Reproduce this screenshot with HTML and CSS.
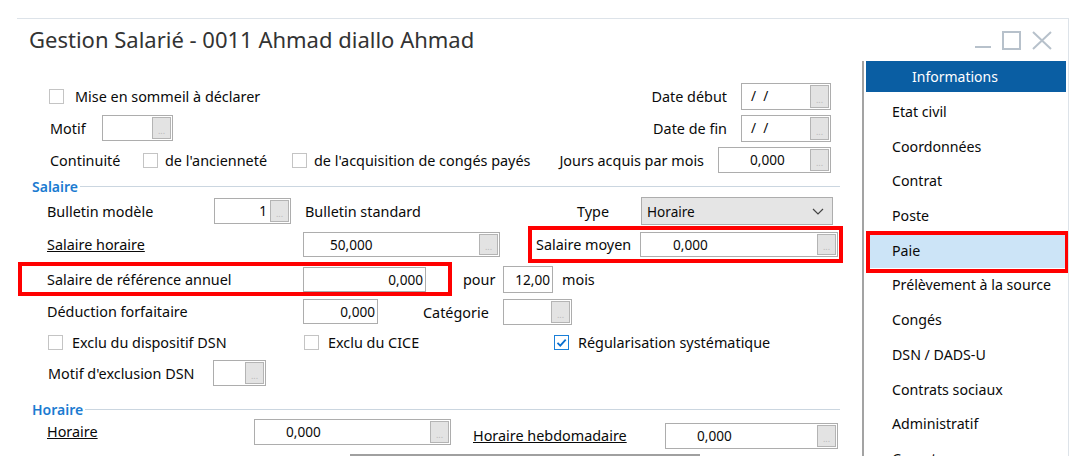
FILE: index.html
```html
<!DOCTYPE html>
<html lang="fr">
<head>
<meta charset="utf-8">
<title>Gestion Salarié</title>
<link rel="stylesheet" href="styles.css">
</head>
<body>
<div class="window">
  <header class="titlebar">
    <h1 class="title">Gestion Salarié - 0011 Ahmad diallo Ahmad</h1>
    <div class="controls">
      <svg width="16" height="19" viewBox="0 0 16 19"><path d="M0 16h16" stroke="#b7c1cb" stroke-width="2"/></svg>
      <svg width="19" height="19" viewBox="0 0 19 19"><rect x="1" y="1" width="17" height="17" fill="none" stroke="#b7c1cb" stroke-width="2"/></svg>
      <svg width="20" height="19" viewBox="0 0 20 19"><path d="M1 1L19 18M19 1L1 18" stroke="#b7c1cb" stroke-width="2"/></svg>
    </div>
  </header>
  <div class="content">
    <main class="form">
      <div class="row row-top">
        <span class="cb"></span><span class="cb-label">Mise en sommeil à déclarer</span>
        <div class="right">
          <span class="rlbl">Date début</span>
          <div class="field date"><span class="val">/&nbsp;&nbsp;/</span><span class="dots">...</span></div>
        </div>
      </div>
      <div class="row row-top">
        <span class="lbl motif-lbl">Motif</span>
        <div class="field motif"><span class="val"></span><span class="dots">...</span></div>
        <div class="right">
          <span class="rlbl">Date de fin</span>
          <div class="field date"><span class="val">/&nbsp;&nbsp;/</span><span class="dots">...</span></div>
        </div>
      </div>
      <div class="row row-top">
        <span class="lbl cont-lbl">Continuité</span>
        <span class="cb"></span><span class="cb-label anc">de l'ancienneté</span>
        <span class="cb"></span><span class="cb-label">de l'acquisition de congés payés</span>
        <div class="right">
          <span class="rlbl">Jours acquis par mois</span>
          <div class="field jours"><span class="val">0,000</span><span class="dots">...</span></div>
        </div>
      </div>

      <div class="section">Salaire</div>

      <div class="row row-d">
        <span class="lbl col1">Bulletin modèle</span>
        <div class="field bulletin"><span class="val num">1</span><span class="dots">...</span></div>
        <span class="lbl bull-std">Bulletin standard</span>
        <span class="lbl type-lbl">Type</span>
        <div class="select"><span>Horaire</span><svg width="12" height="7" viewBox="0 0 12 7"><path d="M1 1l5 5 5-5" fill="none" stroke="#444" stroke-width="1.2"/></svg></div>
      </div>

      <div class="row row-e">
        <span class="lbl col1 ul">Salaire horaire</span>
        <div class="field sal-h"><span class="val">50,000</span><span class="dots">...</span></div>
        <div class="mark mark-moyen">
          <span class="lbl moyen-lbl">Salaire moyen</span>
          <div class="field moyen"><span class="val">0,000</span><span class="dots">...</span></div>
        </div>
      </div>

      <div class="row row-f">
        <div class="mark mark-ref">
          <span class="lbl col1">Salaire de référence annuel</span>
          <div class="field ref"><span class="val num">0,000</span></div>
        </div>
        <span class="lbl pour">pour</span>
        <div class="field mois"><span class="val num">12,00</span></div>
        <span class="lbl mois-lbl">mois</span>
      </div>

      <div class="row row-g">
        <span class="lbl col1">Déduction forfaitaire</span>
        <div class="field deduc"><span class="val num">0,000</span></div>
        <span class="lbl cat-lbl">Catégorie</span>
        <div class="field cat"><span class="val"></span><span class="dots">...</span></div>
      </div>

      <div class="row row-h">
        <span class="cb"></span><span class="cb-label dsn">Exclu du dispositif DSN</span>
        <span class="cb"></span><span class="cb-label cice">Exclu du CICE</span>
        <span class="cb checked"><svg width="13" height="13" viewBox="0 0 13 13"><path d="M2.5 6.8l2.8 2.8 5.4-6" fill="none" stroke="#0a6fd0" stroke-width="1.8"/></svg></span><span class="cb-label">Régularisation systématique</span>
      </div>

      <div class="row row-i">
        <span class="lbl excl-lbl">Motif d'exclusion DSN</span>
        <div class="field excl"><span class="val"></span><span class="dots">...</span></div>
      </div>

      <div class="section section-h">Horaire</div>

      <div class="row row-j">
        <span class="lbl ul hor-lbl">Horaire</span>
        <div class="field hor"><span class="val">0,000</span><span class="dots">...</span></div>
        <span class="lbl ul hebdo-lbl">Horaire hebdomadaire</span>
        <div class="field hebdo"><span class="val">0,000</span><span class="dots">...</span></div>
      </div>

      <div class="row row-k">
        <div class="field partial"><span class="val"></span></div>
      </div>
    </main>

    <nav class="side">
      <div class="side-head">Informations</div>
      <ul class="side-list">
        <li>Etat civil</li>
        <li>Coordonnées</li>
        <li>Contrat</li>
        <li>Poste</li>
        <li class="active">Paie</li>
        <li>Prélèvement à la source</li>
        <li>Congés</li>
        <li>DSN / DADS-U</li>
        <li>Contrats sociaux</li>
        <li>Administratif</li>
        <li>Comptes</li>
      </ul>
    </nav>
  </div>
</div>
</body>
</html>
```

FILE: styles.css
```css
* { box-sizing: border-box; }
html, body { margin: 0; padding: 0; background: #fff; }
body {
  font-family: "Noto Sans", "Open Sans", sans-serif;
  font-size: 14.4px;
  color: #0a0a0a;
}

.window {
  margin: 18px 0 0 17px;
  width: 1052px;
  height: 438px;
  border-top: 1px solid #dde3e9;
  border-right: 1px solid #dde3e9;
  overflow: hidden;
}

.titlebar {
  height: 42px;
  display: flex;
  justify-content: space-between;
  align-items: flex-start;
}
.title {
  margin: 0;
  padding: 5px 0 0 12px;
  font-weight: 400;
  font-size: 22px;
  line-height: 30px;
  color: #333;
  white-space: nowrap;
}
.controls {
  display: flex;
  gap: 11px;
  margin-top: 12px;
  padding-right: 16px;
}

.content { display: flex; height: 395px; }

.form { width: 845px; padding-top: 19px; }

.row { display: flex; align-items: center; white-space: nowrap; }
.lbl { display: block; }
.ul { text-decoration: underline; }

/* checkboxes */
.cb {
  width: 15px; height: 15px;
  border: 1px solid #c4c4c4;
  background: #fff;
  flex: none;
  display: flex; align-items: center; justify-content: center;
}
.cb.checked { border-color: #1a7fd8; }
.cb-label { margin-left: 9px; }

/* fields */
.field {
  display: flex;
  height: 26px;
  border: 1px solid #adadad;
  background: #fff;
  flex: none;
}
.field .val {
  flex: 1;
  line-height: 24px;
  padding: 0 4px;
  overflow: hidden;
  font-size: 13.6px;
}
.field .val.num { text-align: right; padding: 0 2px 0 0; }
.dots {
  width: 19px;
  margin: 1px;
  border: 1px solid #b4b4b4;
  background: #e3e3e3;
  color: #b9b9b9;
  font-size: 9px;
  line-height: 1;
  display: flex;
  align-items: flex-end;
  justify-content: center;
  padding-bottom: 3px;
  flex: none;
}

/* top rows */
.row-top { height: 32px; padding-left: 32px; padding-right: 31px; }
.row-top .cb-label { margin-left: 11px; }
.right { margin-left: auto; display: flex; align-items: center; }
.rlbl { margin-right: 14px; }
.date { width: 90px; height: 27px; }
.date .val { padding-left: 9px; }
.motif-lbl { margin-left: 1px; width: 52px; }
.motif { width: 71px; }
.cont-lbl { margin-left: 1px; width: 93px; }
.row-top .anc { margin-left: 7px; width: 127px; }
.row-top .anc + .cb + .cb-label { margin-left: 7px; }
.jours { width: 113px; }
.jours .val { padding-left: 31px; }

/* section headers */
.section {
  display: flex;
  align-items: center;
  height: 20px;
  padding-left: 15px;
  padding-right: 22px;
  color: #1b7bd1;
  font-weight: 600;
  font-size: 14px;
}
.section::after {
  content: "";
  flex: 1;
  height: 1px;
  background: #cbd6e0;
  margin-left: 2px;
}
.section-h { margin-top: 11px; }

/* salaire rows */
.col1 { margin-left: 30px; width: 256px; }
.row-d { height: 30px; }
.row-d .col1 { width: 167px; }
.bulletin { width: 77px; }
.bulletin .val { padding-right: 3px; }
.bull-std { margin-left: 14px; width: 272px; }
.type-lbl { width: 64px; }
.select {
  width: 192px;
  height: 28px;
  border: 1px solid #adadad;
  background: #e5e5e5;
  display: flex;
  align-items: center;
  justify-content: space-between;
  padding: 0 8px 0 5px;
  font-size: 13.6px;
}

.row-e { height: 36px; }
.sal-h { width: 197px; height: 25px; }
.sal-h .val { padding-left: 26px; line-height: 23px; }
.mark {
  border: 4px solid #ff0000;
  display: flex;
  align-items: center;
  flex: none;
}
.mark-moyen { margin-left: 28px; width: 315px; height: 37px; padding-left: 4px; }
.moyen-lbl { width: 104px; }
.moyen { width: 198px; height: 25px; }
.moyen .val { padding-left: 32px; line-height: 23px; }

.row-f { height: 34px; }
.mark-ref { margin-left: 1px; width: 434px; height: 34px; }
.mark-ref .col1 { margin-left: 25px; }
.ref { width: 123px; height: 25px; }
.ref .val { line-height: 23px; }
.pour { margin-left: 11px; width: 40px; }
.mois { width: 50px; height: 27px; }
.mois .val { line-height: 25px; padding-right: 1px; }
.mois-lbl { margin-left: 9px; }

.row-g { height: 30px; }
.deduc { width: 75px; height: 25px; }
.deduc .val { line-height: 23px; padding-right: 1px; }
.cat-lbl { margin-left: 45px; width: 80px; padding-top: 3px; }
.cat { width: 69px; margin-top: 2px; }

.row-h { height: 32px; padding-left: 31px; }
.row-h .dsn { width: 232px; }
.row-h .cice { width: 226px; }

.row-i { height: 30px; }
.excl-lbl { margin-left: 31px; width: 165px; }
.excl { width: 53px; }

.row-j { height: 32px; align-items: flex-start; }
.hor-lbl { margin-left: 30px; width: 207px; line-height: 25px; }
.hor { width: 197px; }
.hor .val, .hebdo .val { padding-left: 31px; }
.hebdo-lbl { margin-left: 22px; width: 192px; margin-top: 4px; line-height: 26px; }
.hebdo { width: 173px; margin-top: 4px; }

.row-k { align-items: flex-start; }
.partial { margin-left: 333px; margin-top: 3px; width: 350px; border-color: #a0a0a0; border-top-width: 2px; }

/* side navigation */
.side {
  width: 206px;
  border-left: 2px solid #a3a3a3;
  padding: 0 2px;
  flex: none;
}
.side-head {
  height: 31px;
  background: #0a5ea3;
  color: #fff;
  font-size: 14px;
  line-height: 31px;
  padding-left: 46px;
}
.side-list {
  list-style: none;
  margin: 3px 0 0;
  padding: 0;
}
.side-list li {
  height: 34.7px;
  line-height: 34.7px;
  padding-left: 26px;
  font-size: 14.2px;
  color: #0a0a0a;
  position: relative;
}
.side-list li.active { background: #cce4f7; }
.side-list li.active::after {
  content: "";
  position: absolute;
  left: 0;
  right: -3px;
  top: -3px;
  bottom: -5px;
  border: 4px solid #ff0000;
}
```
